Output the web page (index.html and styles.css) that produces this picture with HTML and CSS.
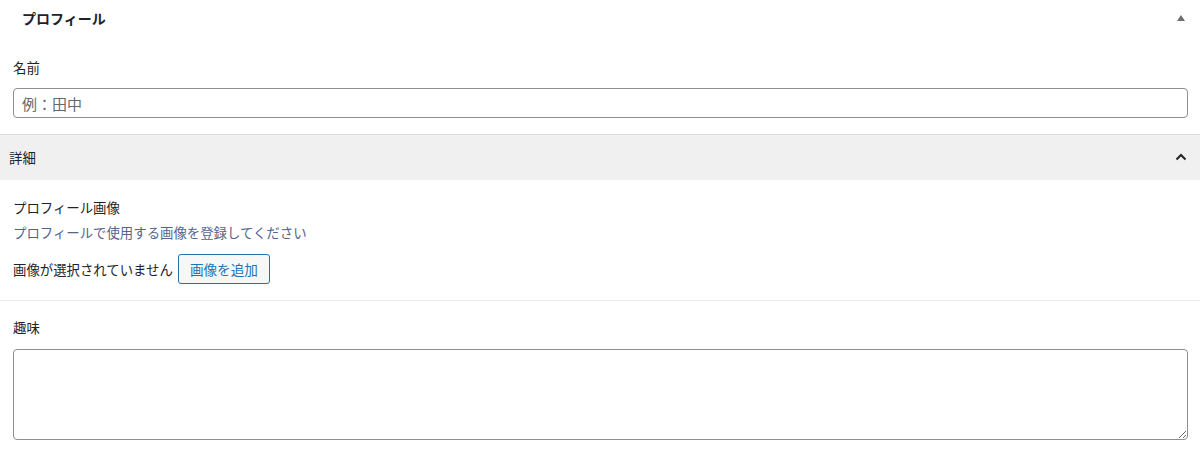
FILE: index.html
```html
<!DOCTYPE html>
<html lang="ja">
<head>
  <meta charset="UTF-8">
  <title>プロフィール</title>
  <link rel="stylesheet" href="styles.css">
</head>
<body>
  <div class="postbox">
    <div class="postbox-header">
      <h2>プロフィール</h2>
      <span class="toggle-arrow"></span>
    </div>

    <div class="field">
      <label class="field-label" for="name">名前</label>
      <input type="text" id="name" class="text-input" placeholder="例：田中">
    </div>

    <div class="accordion">
      <div class="accordion-title">
        <span>詳細</span>
        <svg class="chevron" width="12" height="8" viewBox="0 0 12 8">
          <path d="M1.5 6.5 L6 2 L10.5 6.5" fill="none" stroke="#1d2327" stroke-width="2"/>
        </svg>
      </div>

      <div class="field">
        <div class="field-label">プロフィール画像</div>
        <p class="description">プロフィールで使用する画像を登録してください</p>
        <div class="image-row">
          <span>画像が選択されていません</span>
          <button class="button">画像を追加</button>
        </div>
      </div>

      <div class="field field-last">
        <label class="field-label" for="hobby">趣味</label>
        <textarea id="hobby" class="textarea"></textarea>
      </div>
    </div>
  </div>
</body>
</html>
```

FILE: styles.css
```css
body {
  margin: 0;
  background: #fff;
  font-family: "Noto Sans CJK JP", "Liberation Sans", sans-serif;
  font-size: 13.4px;
  color: #1d2327;
  width: 1200px;
  height: 460px;
  overflow: hidden;
}

.postbox {
  background: #fff;
}

.postbox-header {
  display: flex;
  align-items: center;
  justify-content: space-between;
  height: 36px;
  padding: 0 15px 0 22px;
}

.postbox-header h2 {
  margin: 0;
  font-size: 14px;
  font-weight: bold;
  line-height: 1;
}

.toggle-arrow {
  width: 0;
  height: 0;
  border-left: 4px solid transparent;
  border-right: 4px solid transparent;
  border-bottom: 6px solid #6b6e73;
}

.field {
  padding: 21px 12px 16px 13px;
}

.field-label {
  display: block;
  line-height: 20px;
  margin-bottom: 11px;
}

.text-input {
  display: block;
  box-sizing: border-box;
  width: 100%;
  height: 30px;
  margin: 0;
  padding: 0 8px;
  border: 1px solid #8c8f94;
  border-radius: 4px;
  font-family: inherit;
  font-size: 15px;
  color: #2c3338;
}

.text-input::placeholder {
  color: #646970;
}

.accordion {
  border-top: 1px solid #dcdcde;
}

.accordion-title {
  display: flex;
  align-items: center;
  justify-content: space-between;
  height: 44px;
  padding: 0 13px 0 9px;
  background: #f0f0f1;
  border-bottom: 1px solid #f0f0f1;
}

.accordion .field {
  padding-top: 17px;
  border-bottom: 1px solid #ebebec;
}

.accordion .field-label {
  margin-bottom: 5px;
}

.description {
  margin: 0;
  line-height: 20px;
  color: #54648a;
}

.image-row {
  display: flex;
  align-items: center;
  gap: 5px;
  margin-top: 12px;
}

.button {
  height: 30px;
  padding: 0 11px;
  border: 1px solid #2271b1;
  border-radius: 3px;
  background: #f6f7f7;
  color: #2271b1;
  font-family: inherit;
  font-size: 13.6px;
  cursor: pointer;
}

.accordion .field-last {
  padding-top: 16px;
  border-bottom: none;
}

.field-last .field-label {
  margin-bottom: 12px;
}

.textarea {
  display: block;
  box-sizing: border-box;
  width: 100%;
  height: 91px;
  margin: 0;
  border: 1px solid #8c8f94;
  border-radius: 4px;
  font-family: inherit;
  font-size: 14px;
}
```
